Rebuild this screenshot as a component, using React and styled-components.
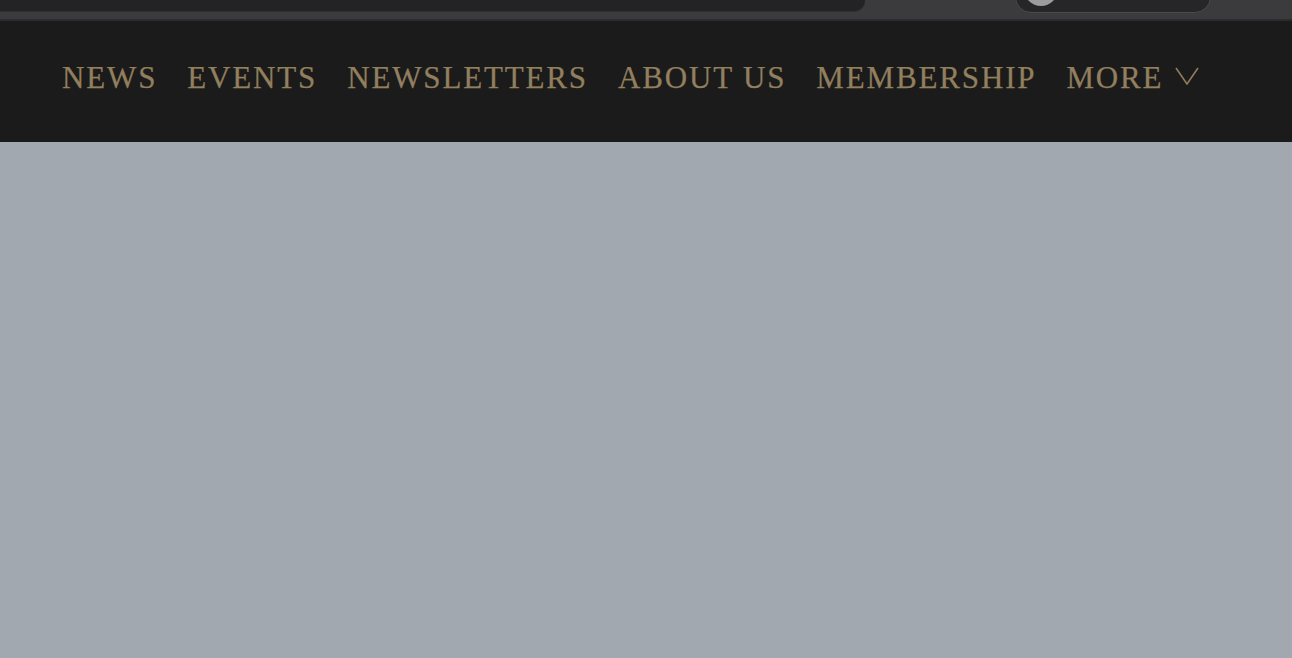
import React from "react";
import styled, {createGlobalStyle} from "styled-components";

const GlobalStyle = createGlobalStyle`
    html, body {
        margin: 0;
        padding: 0;
        background: #a1a8b0;
    }
`

const navItems = ["News", "Events", "Newsletters", "About Us", "Membership"];

const App = () => {
    return (
        <>
            <GlobalStyle/>
            <Page>
                <TopBar>
                    <SearchBox/>
                    <ToggleWrap>
                        <TogglePill>
                            <ToggleKnob/>
                        </TogglePill>
                    </ToggleWrap>
                </TopBar>
                <NavBar>
                    <NavList>
                        {navItems.map((item) => (
                            <NavLink key={item}>{item}</NavLink>
                        ))}
                        <NavLink>
                            More
                            <Chevron viewBox="0 0 24 18" aria-hidden="true">
                                <path d="M1 1 L12 17 L23 1" fill="none" stroke="#8f7c5c" strokeWidth="1.6"/>
                            </Chevron>
                        </NavLink>
                    </NavList>
                </NavBar>
                <Content/>
            </Page>
        </>
    )
}

const Page = styled.div`
    width: 100%;
    min-height: 658px;
    display: flex;
    flex-direction: column;
    background: #a1a8b0;
`

const TopBar = styled.div`
    height: 19px;
    background: #3b3b3e;
    border-bottom: 2px solid #2c2c2e;
    display: flex;
    align-items: flex-start;
    overflow: hidden;
`

const SearchBox = styled.div`
    width: 865px;
    height: 11px;
    background: #232326;
    border-bottom-right-radius: 22px;
    box-shadow: 0 1px 0 #2f2f31;
`

const ToggleWrap = styled.div`
    margin-left: 150px;
    width: 196px;
    position: relative;
`

const TogglePill = styled.div`
    height: 30px;
    margin-top: -19px;
    background: #262628;
    border: 1px solid #4a4a4d;
    border-radius: 16px;
    position: relative;
`

const ToggleKnob = styled.div`
    position: absolute;
    left: 8px;
    top: 2px;
    width: 34px;
    height: 34px;
    margin-top: -12px;
    border-radius: 50%;
    background: #9c9c9e;
`

const NavBar = styled.nav`
    height: 121px;
    background: #1b1b1b;
    display: flex;
    align-items: center;
    padding: 0 0 9px 62px;
    box-sizing: border-box;
`

const NavList = styled.div`
    display: flex;
    align-items: center;
    gap: 30px;
`

const NavLink = styled.a`
    display: flex;
    align-items: center;
    gap: 12px;
    font-family: "Liberation Serif", "Times New Roman", serif;
    font-size: 31px;
    letter-spacing: 1.85px;
    text-transform: uppercase;
    color: #927f5e;
    line-height: 1;
    cursor: pointer;
    -webkit-text-stroke: 0.25px #927f5e;
`

const Chevron = styled.svg`
    width: 24px;
    height: 18px;
    margin-top: -2px;
`

const Content = styled.main`
    flex: 1;
    background: #a1a8b0;
`

export default App;
